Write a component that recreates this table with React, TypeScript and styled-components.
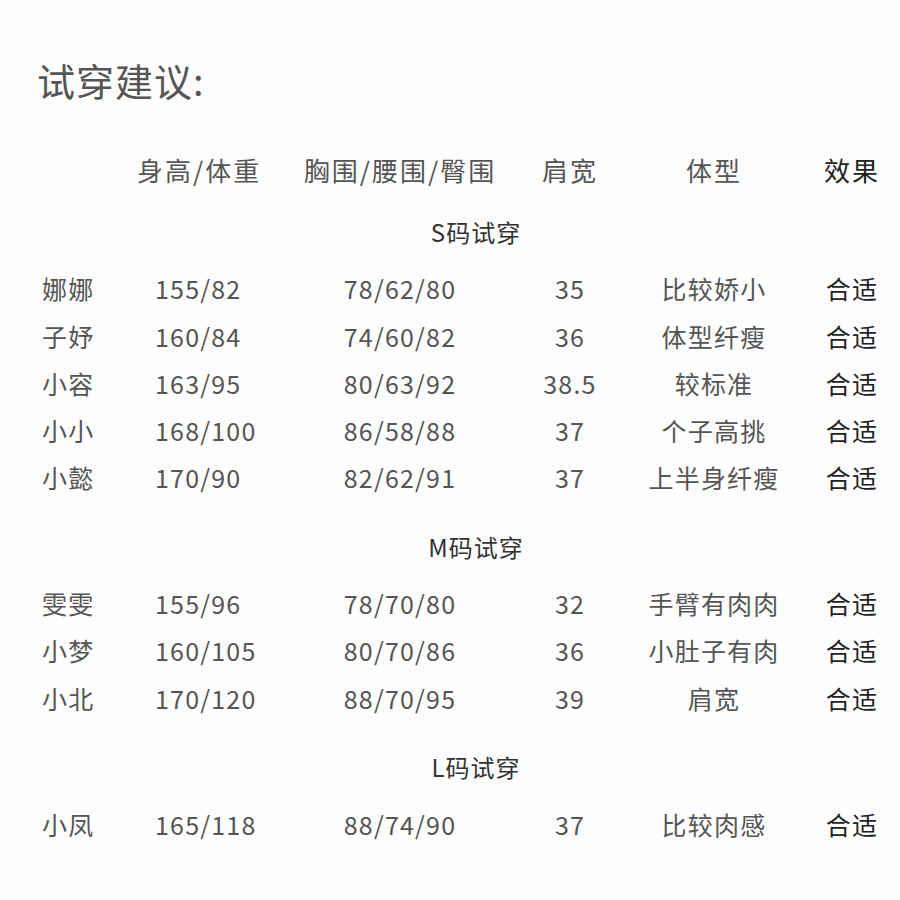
import React from "react";
import styled, { createGlobalStyle } from "styled-components";

const GlobalStyle = createGlobalStyle`
  html, body {
    margin: 0;
    padding: 0;
    background: #fdfdfd;
  }
  body {
    font-family: "Noto Sans CJK SC", "Noto Sans", sans-serif;
    color: #555;
  }
`;

const COLS = "95px 133px 260px 80px 208px 68px";

const Page = styled.div`
  width: 900px;
  height: 900px;
  padding: 60px 0 0 0;
  box-sizing: border-box;
  overflow: hidden;
`;

const Title = styled.h1`
  margin: 0 0 0 37px;
  font-size: 38px;
  line-height: 40px;
  font-weight: 400;
  letter-spacing: 1px;
  color: #555;
`;

const Table = styled.div`
  display: flex;
  flex-direction: column;
  margin: 46px 0 0 42px;
`;

const Row = styled.div<{ $gap?: number }>`
  display: grid;
  grid-template-columns: ${COLS};
  align-items: center;
  height: 47.3px;
  margin-top: ${(p) => p.$gap ?? 0}px;
  font-size: 25px;
  letter-spacing: 1.2px;
`;

const Cell = styled.div<{ $align?: "start" | "center"; $pad?: number; $strong?: boolean }>`
  justify-self: ${(p) => p.$align ?? "center"};
  padding-left: ${(p) => p.$pad ?? 0}px;
  white-space: nowrap;
  color: ${(p) => (p.$strong ? "#222" : "#555")};
`;

const HeadRow = styled(Row)`
  font-size: 26px;
  letter-spacing: 2px;
`;

const SectionLabel = styled.div<{ $gap: number }>`
  height: 47.3px;
  line-height: 47.3px;
  margin-top: ${(p) => p.$gap}px;
  width: 844px;
  text-align: center;
  padding-left: 24px;
  box-sizing: border-box;
  font-size: 24px;
  letter-spacing: 1px;
  color: #333;
`;

type Person = [string, string, string, string, string];

const sections: { label: string; gap: number; first: number; rows: Person[] }[] = [
  {
    label: "S码试穿",
    gap: 15,
    first: 9,
    rows: [
      ["娜娜", "155/82", "78/62/80", "35", "比较娇小"],
      ["子妤", "160/84", "74/60/82", "36", "体型纤瘦"],
      ["小容", "163/95", "80/63/92", "38.5", "较标准"],
      ["小小", "168/100", "86/58/88", "37", "个子高挑"],
      ["小懿", "170/90", "82/62/91", "37", "上半身纤瘦"],
    ],
  },
  {
    label: "M码试穿",
    gap: 22,
    first: 9,
    rows: [
      ["雯雯", "155/96", "78/70/80", "32", "手臂有肉肉"],
      ["小梦", "160/105", "80/70/86", "36", "小肚子有肉"],
      ["小北", "170/120", "88/70/95", "39", "肩宽"],
    ],
  },
  {
    label: "L码试穿",
    gap: 22,
    first: 10,
    rows: [["小凤", "165/118", "88/74/90", "37", "比较肉感"]],
  },
];

export default function App() {
  return (
    <Page>
      <GlobalStyle />
      <Title>试穿建议:</Title>
      <Table>
        <HeadRow>
          <Cell />
          <Cell $align="start">身高/体重</Cell>
          <Cell>胸围/腰围/臀围</Cell>
          <Cell>肩宽</Cell>
          <Cell>体型</Cell>
          <Cell $strong>效果</Cell>
        </HeadRow>
        {sections.map((s) => (
          <React.Fragment key={s.label}>
            <SectionLabel $gap={s.gap}>{s.label}</SectionLabel>
            {s.rows.map((r, i) => (
              <Row key={r[0]} $gap={i === 0 ? s.first : 0}>
                <Cell $align="start">{r[0]}</Cell>
                <Cell $align="start" $pad={18}>{r[1]}</Cell>
                <Cell>{r[2]}</Cell>
                <Cell>{r[3]}</Cell>
                <Cell>{r[4]}</Cell>
                <Cell $strong>合适</Cell>
              </Row>
            ))}
          </React.Fragment>
        ))}
      </Table>
    </Page>
  );
}
